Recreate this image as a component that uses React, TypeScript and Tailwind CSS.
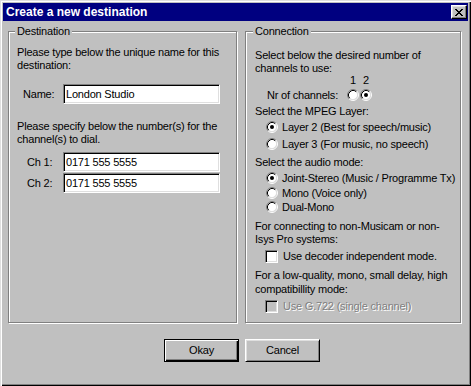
import React from "react";

const sunken =
  "border border-t-[#808080] border-l-[#808080] border-r-white border-b-white shadow-[inset_1px_1px_0_#000,inset_-1px_-1px_0_#dfdfdf]";

function Radio({ checked }: { checked?: boolean }) {
  return (
    <svg width="12" height="12" viewBox="0 0 12 12" className="shrink-0">
      <circle cx="6" cy="6" r="4.5" fill="#fff" />
      <path d="M2.11 9.89 A5.5 5.5 0 0 1 9.89 2.11" stroke="#808080" fill="none" />
      <path d="M9.89 2.11 A5.5 5.5 0 0 1 2.11 9.89" stroke="#fff" fill="none" />
      <path d="M2.82 9.18 A4.5 4.5 0 0 1 9.18 2.82" stroke="#000" fill="none" />
      <path d="M9.18 2.82 A4.5 4.5 0 0 1 2.82 9.18" stroke="#dfdfdf" fill="none" />
      {checked && <circle cx="6" cy="6" r="2" fill="#000" />}
    </svg>
  );
}

function Check({ disabled }: { disabled?: boolean }) {
  return (
    <div
      className={`w-[13px] h-[13px] shrink-0 ${sunken} ${disabled ? "bg-[#c0c0c0]" : "bg-white"}`}
    />
  );
}

function Field({ value }: { value: string }) {
  return (
    <div className={`w-[157px] h-[20px] ${sunken} bg-white flex items-center pl-[2px] text-black`}>
      {value}
    </div>
  );
}

function Line({ children, cls = "" }: { children: React.ReactNode; cls?: string }) {
  return <div className={`h-[13px] leading-[13px] whitespace-nowrap ${cls}`}>{children}</div>;
}

function RadioRow({ checked, label, cls = "" }: { checked?: boolean; label: string; cls?: string }) {
  return (
    <div className={`h-[14px] flex items-center ml-[11px] gap-[4px] whitespace-nowrap ${cls}`}>
      <Radio checked={checked} />
      <span className="leading-[14px]">{label}</span>
    </div>
  );
}

export default function App() {
  return (
    <div className="w-[471px] h-[386px] bg-[#c0c0c0] p-[3px] text-[11px] tracking-[-0.2px] text-black font-['Liberation_Sans',Arial,sans-serif] shadow-[inset_1px_1px_0_#dfdfdf,inset_2px_2px_0_#fff,inset_-1px_-1px_0_#000,inset_-2px_-2px_0_#808080]">
      {/* Title bar */}
      <div className="h-[18px] w-[465px] bg-[#000080] flex items-center justify-between pl-[3px] pr-[1px]">
        <span className="text-white font-bold text-[12px] tracking-normal leading-[18px]">Create a new destination</span>
        <div className="w-[16px] h-[14px] bg-[#c0c0c0] border border-t-white border-l-white border-r-black border-b-black shadow-[inset_-1px_-1px_0_#808080,inset_1px_1px_0_#dfdfdf] flex items-center justify-center">
          <svg width="8" height="7" viewBox="0 0 8 7">
            <path d="M0 0h2v1h1v1h2V1h1V0h2v1H7v1H6v1H5v1h1v1h1v1h1v1H6V6H5V5H3v1H2v1H0V6h1V5h1V4h1V3H2V2H1V1H0z" fill="#000" />
          </svg>
        </div>
      </div>

      {/* Groups */}
      <div className="flex gap-[8px] mt-[10px] ml-[5px]">
        {/* Destination */}
        <div className="relative w-[229px] h-[292px] border border-[#808080] shadow-[inset_1px_1px_0_#fff,1px_1px_0_#fff]">
          <span className="absolute left-[6px] top-[-7px] px-[2px] bg-[#c0c0c0] leading-[13px]">Destination</span>
          <div className="flex flex-col pl-[8px] pt-[14px]">
            <Line>Please type below the unique name for this</Line>
            <Line>destination:</Line>
            <div className="flex items-center h-[20px] mt-[12px]">
              <span className="ml-[6px] w-[40px]">Name:</span>
              <Field value="London Studio" />
            </div>
            <Line cls="mt-[16px]">Please specify below the number(s) for the</Line>
            <Line>channel(s) to dial.</Line>
            <div className="flex items-center h-[20px] mt-[6px]">
              <span className="ml-[10px] w-[36px]">Ch 1:</span>
              <Field value="0171 555 5555" />
            </div>
            <div className="flex items-center h-[20px] mt-[1px]">
              <span className="ml-[10px] w-[36px]">Ch 2:</span>
              <Field value="0171 555 5555" />
            </div>
          </div>
        </div>

        {/* Connection */}
        <div className="relative w-[216px] h-[292px] border border-[#808080] shadow-[inset_1px_1px_0_#fff,1px_1px_0_#fff]">
          <span className="absolute left-[7px] top-[-7px] px-[2px] bg-[#c0c0c0] leading-[13px]">Connection</span>
          <div className="flex flex-col pl-[9px] pt-[17px]">
            <Line>Select below the desired number of</Line>
            <Line>channels to use:</Line>
            <div className="h-[11px] leading-[11px] flex ml-[92px] gap-[1px]">
              <span className="w-[12px] text-center">1</span>
              <span className="w-[12px] text-center">2</span>
            </div>
            <div className="h-[14px] flex items-center mt-[2px] ml-[12px]">
              <span className="w-[80px] whitespace-nowrap">Nr of channels:</span>
              <div className="flex gap-[1px]">
                <Radio />
                <Radio checked />
              </div>
            </div>
            <div className="h-[14px] leading-[14px] mt-[2px]">Select the MPEG Layer:</div>
            <RadioRow cls="mt-[2px]" checked label="Layer 2 (Best for speech/music)" />
            <RadioRow cls="mt-[3px]" label="Layer 3 (For music, no speech)" />
            <div className="h-[14px] leading-[14px] mt-[4px]">Select the audio mode:</div>
            <RadioRow cls="mt-[2px]" checked label="Joint-Stereo (Music / Programme Tx)" />
            <RadioRow cls="mt-[1px]" label="Mono (Voice only)" />
            <RadioRow label="Dual-Mono" />
            <Line cls="mt-[6px]">For connecting to non-Musicam or non-</Line>
            <Line>Isys Pro systems:</Line>
            <div className="h-[14px] flex items-center ml-[10px] gap-[5px] mt-[3px] whitespace-nowrap">
              <Check />
              <span>Use decoder independent mode.</span>
            </div>
            <div className="h-[14px] leading-[14px] mt-[5px] whitespace-nowrap">For a low-quality, mono, small delay, high</div>
            <div className="h-[14px] leading-[14px] whitespace-nowrap">compatibillity mode:</div>
            <div className="h-[14px] flex items-center ml-[10px] gap-[5px] mt-[3px] whitespace-nowrap">
              <Check disabled />
              <span className="text-[#808080] [text-shadow:1px_1px_0_#fff]">Use G.722 (single channel)</span>
            </div>
          </div>
        </div>
      </div>

      {/* Buttons */}
      <div className="flex gap-[6px] mt-[16px] ml-[161px]">
        <button className="w-[75px] h-[23px] bg-[#c0c0c0] border border-black shadow-[inset_1px_1px_0_#fff,inset_-1px_-1px_0_#000,inset_-2px_-2px_0_#808080] text-[11px] flex items-center justify-center">
          Okay
        </button>
        <button className="w-[75px] h-[23px] bg-[#c0c0c0] border border-t-white border-l-white border-r-black border-b-black shadow-[inset_1px_1px_0_#dfdfdf,inset_-1px_-1px_0_#808080] text-[11px] flex items-center justify-center">
          Cancel
        </button>
      </div>
    </div>
  );
}
